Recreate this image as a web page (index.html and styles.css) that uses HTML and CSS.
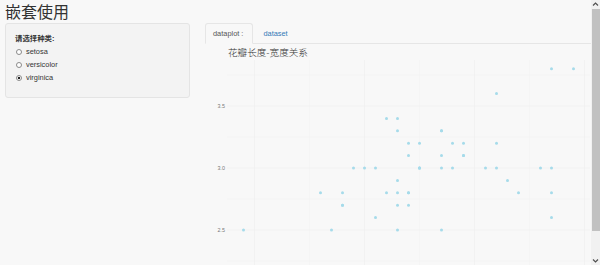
FILE: index.html
```html
<!DOCTYPE html>
<html lang="zh">
<head>
    <meta charset="UTF-8">
    <meta name="viewport" content="width=device-width, initial-scale=1.0">
    <title>嵌套使用</title>
    <link rel="stylesheet" href="styles.css">
</head>
<body>
    <div class="page">
        <h2 class="title">嵌套使用</h2>
        <div class="layout">
            <div class="sidebar">
                <div class="control-label">请选择种类:</div>
                <label class="radio"><input type="radio" name="species" value="setosa"><span>setosa</span></label>
                <label class="radio"><input type="radio" name="species" value="versicolor"><span>versicolor</span></label>
                <label class="radio"><input type="radio" name="species" value="virginica" checked><span>virginica</span></label>
            </div>
            <div class="main">
                <ul class="tabs">
                    <li class="tab active"><a href="#">dataplot :</a></li>
                    <li class="tab"><a href="#">dataset</a></li>
                </ul>
                <svg class="plot" id="plot" viewBox="0 0 385 221" width="385" height="221">
                    <text class="plot-title" x="23" y="12">花瓣长度-宽度关系</text>
                    <g class="grid-minor">
                        <line x1="22" x2="385" y1="31" y2="31"/>
                        <line x1="22" x2="385" y1="93" y2="93"/>
                        <line x1="22" x2="385" y1="155" y2="155"/>
                        <line x1="22" x2="385" y1="217" y2="217"/>
                        <line x1="104.5" x2="104.5" y1="16" y2="221"/>
                        <line x1="214.5" x2="214.5" y1="16" y2="221"/>
                        <line x1="324.5" x2="324.5" y1="16" y2="221"/>
                    </g>
                    <g class="grid-major">
                        <line x1="22" x2="385" y1="62" y2="62"/>
                        <line x1="22" x2="385" y1="124" y2="124"/>
                        <line x1="22" x2="385" y1="186" y2="186"/>
                        <line x1="49.5" x2="49.5" y1="16" y2="221"/>
                        <line x1="159.5" x2="159.5" y1="16" y2="221"/>
                        <line x1="269.5" x2="269.5" y1="16" y2="221"/>
                        <line x1="379.5" x2="379.5" y1="16" y2="221"/>
                    </g>
                    <g class="axis-text">
                        <text x="20" y="64">3.5</text>
                        <text x="20" y="126">3.0</text>
                        <text x="20" y="188">2.5</text>
                    </g>
                    <g class="points" id="points"></g>
                </svg>
            </div>
        </div>
    </div>
    <div class="scrollbar">
        <div class="scroll-btn">
            <svg width="9" height="9" viewBox="0 0 9 9"><polyline points="2,5.5 4.5,3 7,5.5" fill="none" stroke="#505050" stroke-width="1.2"/></svg>
        </div>
        <div class="scroll-track">
            <div class="scroll-thumb"></div>
        </div>
        <div class="scroll-btn">
            <svg width="9" height="9" viewBox="0 0 9 9"><polyline points="2,3.5 4.5,6 7,3.5" fill="none" stroke="#505050" stroke-width="1.2"/></svg>
        </div>
    </div>

    <script>
        // virginica: Sepal.Length, Sepal.Width
        const virginica = [
            [6.3,3.3],[5.8,2.7],[7.1,3.0],[6.3,2.9],[6.5,3.0],[7.6,3.0],[4.9,2.5],[7.3,2.9],[6.7,2.5],[7.2,3.6],
            [6.5,3.2],[6.4,2.7],[6.8,3.0],[5.7,2.5],[5.8,2.8],[6.4,3.2],[6.5,3.0],[7.7,3.8],[7.7,2.6],[6.0,2.2],
            [6.9,3.2],[5.6,2.8],[7.7,2.8],[6.3,2.7],[6.7,3.3],[7.2,3.2],[6.2,2.8],[6.1,3.0],[6.4,2.8],[7.2,3.0],
            [7.4,2.8],[7.9,3.8],[6.4,2.8],[6.3,2.8],[6.1,2.6],[7.7,3.0],[6.3,3.4],[6.4,3.1],[6.0,3.0],[6.9,3.1],
            [6.7,3.1],[6.9,3.1],[5.8,2.7],[6.8,3.2],[6.7,3.3],[6.7,3.0],[6.3,2.5],[6.5,3.0],[6.2,3.4],[5.9,3.0]
        ];

        function drawPoints() {
            const group = document.getElementById('points');
            const ns = 'http://www.w3.org/2000/svg';
            virginica.forEach(function (p) {
                const c = document.createElementNS(ns, 'circle');
                c.setAttribute('cx', (49.5 + (p[0] - 5) * 110).toFixed(1));
                c.setAttribute('cy', (124 - (p[1] - 3) * 124).toFixed(1));
                c.setAttribute('r', '1.5');
                group.appendChild(c);
            });
        }

        drawPoints();
    </script>
</body>
</html>
```

FILE: styles.css
```css
html, body {
    margin: 0;
    height: 265px;
    overflow: hidden;
}

body {
    display: flex;
    background-color: #f8f8f8;
    font-family: 'Liberation Sans', Arial, 'Noto Sans CJK SC', sans-serif;
    font-size: 7.4px;
    color: #333;
}

.page {
    flex: 1;
    min-width: 0;
    display: flex;
    flex-direction: column;
}

.title {
    margin: 0;
    padding-left: 5px;
    height: 24px;
    font-family: 'Noto Sans CJK SC', sans-serif;
    font-size: 16px;
    font-weight: normal;
    line-height: 22px;
    color: #333;
}

.layout {
    display: flex;
    align-items: flex-start;
}

.sidebar {
    width: 185px;
    height: 75px;
    margin-left: 5px;
    box-sizing: border-box;
    padding: 10px 9px;
    background-color: #f3f3f3;
    border: 1px solid #e4e4e4;
    border-radius: 3px;
}

.control-label {
    height: 10px;
    line-height: 10px;
    font-weight: bold;
    margin-bottom: 1px;
    color: #333;
}

.radio {
    display: flex;
    align-items: center;
    height: 13px;
    color: #333;
    cursor: pointer;
}

.radio input {
    appearance: none;
    -webkit-appearance: none;
    width: 6px;
    height: 6px;
    margin: 0 4px 0 1px;
    border: 1px solid #8a8a8a;
    border-radius: 50%;
    background-color: #fff;
    box-sizing: border-box;
}

.radio input:checked {
    background: radial-gradient(circle, #222 0, #222 1.3px, #fff 1.6px);
}

.main {
    flex: 1;
    min-width: 0;
    margin-left: 15px;
}

.tabs {
    display: flex;
    align-items: flex-start;
    list-style: none;
    margin: 0;
    padding: 0;
    height: 20px;
    border-bottom: 1px solid #e6e6e6;
}

.tab {
    height: 21px;
    margin-right: 2px;
    margin-bottom: -1px;
    box-sizing: border-box;
    border: 1px solid transparent;
    border-radius: 3px 3px 0 0;
}

.tab a {
    display: block;
    padding: 0 9px 0 7px;
    line-height: 20px;
    color: #337ab7;
    text-decoration: none;
}

.tab.active {
    background-color: #f8f8f8;
    border-color: #e6e6e6;
    border-bottom-color: transparent;
}

.tab.active a {
    color: #555;
}

.plot {
    display: block;
}

.plot-title {
    font-family: 'Noto Sans CJK SC', serif;
    font-size: 9.6px;
    font-weight: 300;
    fill: #333;
}

.grid-major line {
    stroke: #eeeeee;
    stroke-width: 0.6;
}

.grid-minor line {
    stroke: #f2f2f2;
    stroke-width: 0.5;
}

.axis-text text {
    font-family: 'Liberation Sans', Arial, sans-serif;
    font-size: 5.4px;
    fill: #7a7a7a;
    text-anchor: end;
}

.points circle {
    fill: #a6dbea;
}

.scrollbar {
    width: 9px;
    display: flex;
    flex-direction: column;
    background-color: #f1f1f1;
}

.scroll-btn {
    height: 9px;
    display: flex;
    align-items: center;
    justify-content: center;
}

.scroll-btn:last-child {
    height: 10px;
}

.scroll-track {
    flex: 1;
}

.scroll-thumb {
    height: 222px;
    margin-left: 1px;
    background-color: #c1c1c1;
}
```
